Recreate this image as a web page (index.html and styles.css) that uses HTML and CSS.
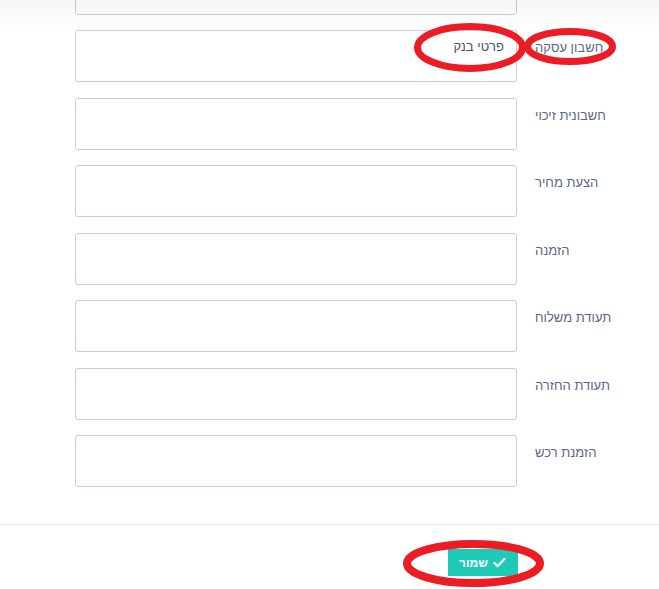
FILE: index.html
```html
<!DOCTYPE html>
<html lang="he" dir="rtl">
<head>
    <meta charset="UTF-8">
    <meta name="viewport" content="width=device-width, initial-scale=1.0">
    <title>מסמכים</title>
    <link rel="stylesheet" href="styles.css">
</head>
<body>
    <div class="top-fade"></div>
    <form class="doc-form">
        <div class="row">
            <label for="f0"></label>
            <textarea id="f0"></textarea>
        </div>
        <div class="row">
            <label for="f1">חשבון עסקה</label>
            <textarea id="f1">פרטי בנק</textarea>
        </div>
        <div class="row">
            <label for="f2">חשבונית זיכוי</label>
            <textarea id="f2"></textarea>
        </div>
        <div class="row">
            <label for="f3">הצעת מחיר</label>
            <textarea id="f3"></textarea>
        </div>
        <div class="row">
            <label for="f4">הזמנה</label>
            <textarea id="f4"></textarea>
        </div>
        <div class="row">
            <label for="f5">תעודת משלוח</label>
            <textarea id="f5"></textarea>
        </div>
        <div class="row">
            <label for="f6">תעודת החזרה</label>
            <textarea id="f6"></textarea>
        </div>
        <div class="row">
            <label for="f7">הזמנת רכש</label>
            <textarea id="f7"></textarea>
        </div>
    </form>
    <div class="footer">
        <button type="button" class="save">
            <svg class="check" viewBox="0 0 14 12" width="13" height="11">
                <path d="M1.5 6.5 L5 10 L12.5 2"/>
            </svg>
            שמור
        </button>
    </div>

    <!-- annotation marks -->
    <svg class="marks" viewBox="0 0 659 589" width="659" height="589">
        <ellipse cx="470" cy="47.5" rx="52.5" ry="21"/>
        <ellipse cx="570" cy="46.5" rx="42.5" ry="15"/>
        <ellipse cx="473.5" cy="563.5" rx="66.5" ry="19.5" class="wide"/>
    </svg>
</body>
</html>
```

FILE: styles.css
```css
html, body {
    margin: 0;
    padding: 0;
}
body {
    position: relative;
    width: 659px;
    height: 589px;
    overflow: hidden;
    background: #fff;
    font-family: "Liberation Sans", Arial, sans-serif;
    font-size: 13px;
    color: #5b6785;
}
.top-fade {
    position: absolute;
    top: 0;
    left: 0;
    right: 0;
    height: 32px;
    background: linear-gradient(to bottom, rgba(0, 0, 0, 0.035), rgba(0, 0, 0, 0));
    pointer-events: none;
    z-index: 5;
}
.doc-form {
    display: flex;
    flex-direction: column;
    gap: 15.5px;
    margin-top: -37.5px;
    padding-left: 75px;
}
.row {
    display: flex;
    gap: 18px;
}
.row label {
    flex: 0 0 124px;
    display: flex;
    justify-content: flex-end;
    padding-top: 8px;
    line-height: 20px;
    color: #5b6785;
}
.row textarea {
    flex: 1;
    height: 52px;
    box-sizing: border-box;
    border: 1px solid #c6ccd8;
    border-radius: 3px;
    padding: 6px 12px;
    font-family: inherit;
    font-size: 13px;
    line-height: 20px;
    color: #4a5166;
    resize: none;
    background: transparent;
}
.footer {
    margin-top: 37px;
    border-top: 1px solid #e8e8e8;
    padding: 24px 141px 0 0;
    display: flex;
}
.save {
    display: flex;
    align-items: center;
    gap: 5px;
    height: 27px;
    padding: 0 12px 0 11px;
    border: none;
    border-radius: 0;
    background: #1ec9b5;
    color: #fff;
    font-family: inherit;
    font-size: 12px;
    font-weight: bold;
    cursor: pointer;
}
.check path {
    fill: none;
    stroke: #fff;
    stroke-width: 2.4;
    stroke-linecap: round;
    stroke-linejoin: round;
}
.marks {
    position: absolute;
    top: 0;
    left: 0;
    pointer-events: none;
    z-index: 10;
}
.marks ellipse {
    fill: none;
    stroke: #ec1c24;
    stroke-width: 7;
}
.marks ellipse.wide {
    stroke-width: 8;
}
```
